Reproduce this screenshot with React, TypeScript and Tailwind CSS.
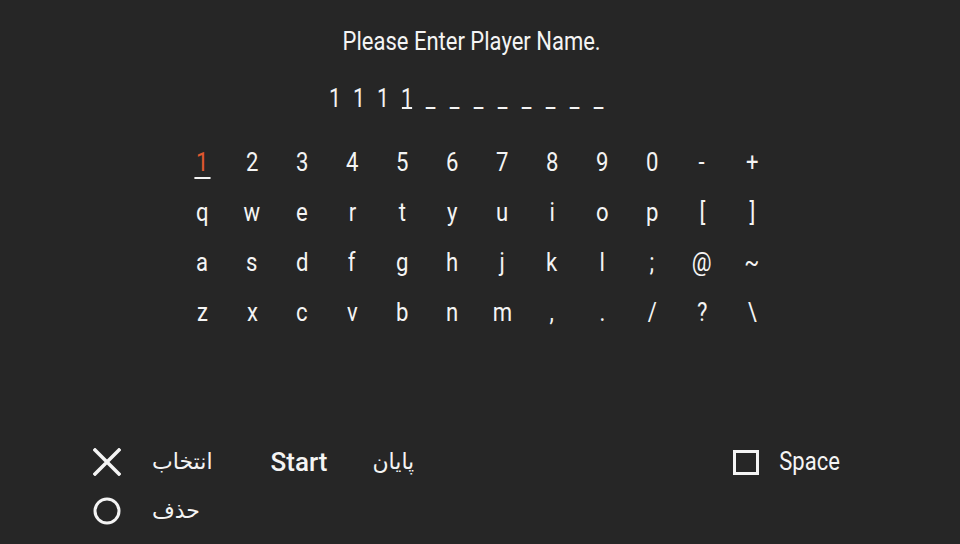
import React from "react"

const rows = [
  ["1", "2", "3", "4", "5", "6", "7", "8", "9", "0", "-", "+"],
  ["q", "w", "e", "r", "t", "y", "u", "i", "o", "p", "[", "]"],
  ["a", "s", "d", "f", "g", "h", "j", "k", "l", ";", "@", "~"],
  ["z", "x", "c", "v", "b", "n", "m", ",", ".", "/", "?", "\\"],
]

const nameChars = ["1", "1", "1", "1", "_", "_", "_", "_", "_", "_", "_", "_"]

export default function App() {
  return (
    <div className="w-[960px] h-[544px] bg-[#262626] text-[#f4f4f4] font-['Roboto','DejaVu_Sans',sans-serif] flex flex-col overflow-hidden">
      {/* title */}
      <div className="pt-[27px] pr-[16px] flex justify-center">
        <span className="text-[25px] leading-[30px] inline-block scale-x-[0.88]">Please Enter Player Name.</span>
      </div>

      {/* entered name */}
      <div className="mt-[27px] pl-[323px] flex">
        {nameChars.map((c, i) => (
          <div key={i} className="w-[24px] h-[30px] flex items-center justify-center text-[25px] leading-[30px]">
            <span className={"inline-block scale-x-[0.85] " + (i === 3 ? "relative" : "")}>
              {c}
              {i === 3 && <span className="absolute left-[1px] right-[1px] bottom-[5px] h-[2px] bg-[#f4f4f4]" />}
            </span>
          </div>
        ))}
      </div>

      {/* keyboard */}
      <div className="mt-[23px] pl-[177px] grid grid-cols-[repeat(12,50px)] grid-rows-[repeat(4,50px)]">
        {rows.flat().map((k, i) => (
          <div key={i} className="flex items-center justify-center text-[26px] leading-none">
            {i === 0 ? (
              <span className="relative inline-block scale-x-[0.85] text-[#e0582f]">
                {k}
                <span className="absolute left-[-2px] right-[-2px] bottom-[-4px] h-[2px] bg-[#f4f4f4]" />
              </span>
            ) : (
              <span className="inline-block scale-x-[0.85]">{k}</span>
            )}
          </div>
        ))}
      </div>

      {/* controls */}
      <div className="mt-auto pb-[18px] flex flex-col gap-[19px]">
        <div className="flex items-center h-[30px] pl-[93px] pr-[120px]">
          <svg width="28" height="28" viewBox="0 0 28 28" className="shrink-0">
            <path d="M2 2 L26 26 M26 2 L2 26" stroke="#f4f4f4" strokeWidth="3.5" strokeLinecap="square" />
          </svg>
          <span dir="rtl" className="ml-[31px] text-[22px] leading-[30px] font-['DejaVu_Sans',sans-serif]">انتخاب</span>
          <span className="ml-[58px] text-[26px] leading-[30px] font-medium">Start</span>
          <span dir="rtl" className="ml-[45px] text-[22px] leading-[30px] font-['DejaVu_Sans',sans-serif]">پایان</span>
          <div className="ml-auto w-[26px] h-[25px] border-[3px] border-[#f4f4f4]" />
          <span className="ml-[12px] text-[25px] leading-[30px] inline-block scale-x-[0.88] origin-right">Space</span>
        </div>
        <div className="flex items-center h-[30px] pl-[93px]">
          <svg width="28" height="28" viewBox="0 0 28 28" className="shrink-0">
            <circle cx="14" cy="14" r="12" fill="none" stroke="#f4f4f4" strokeWidth="3" />
          </svg>
          <span dir="rtl" className="ml-[31px] text-[22px] leading-[30px] font-['DejaVu_Sans',sans-serif]">حذف</span>
        </div>
      </div>
    </div>
  )
}
